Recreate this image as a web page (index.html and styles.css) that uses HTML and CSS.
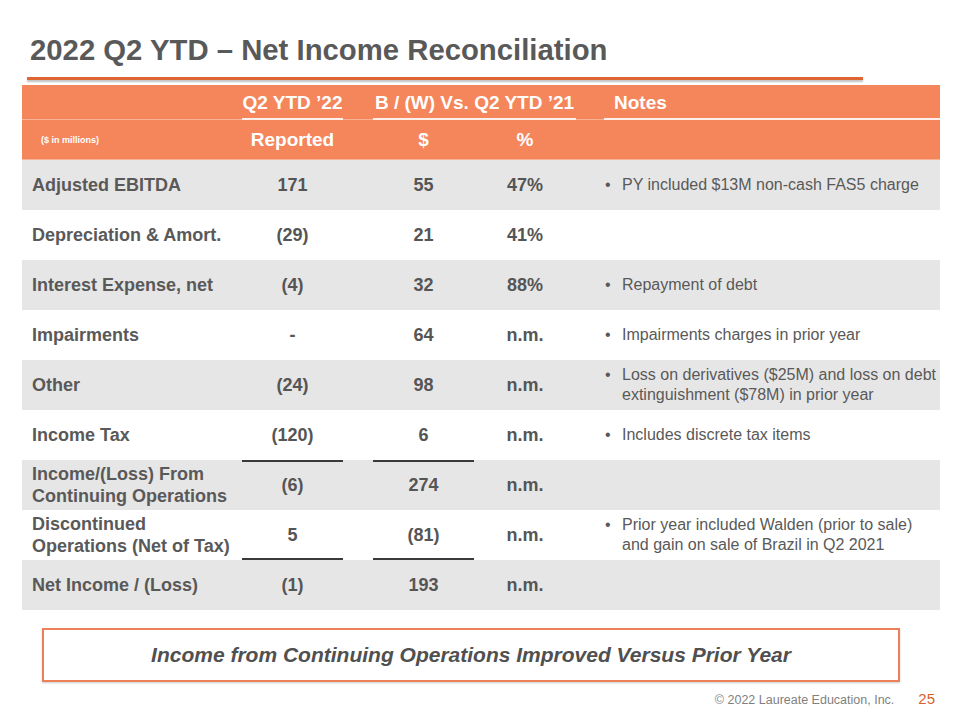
FILE: index.html
```html
<!DOCTYPE html>
<html lang="en">
  <head>
    <meta charset="UTF-8" />
    <meta name="viewport" content="width=device-width, initial-scale=1.0" />
    <title>2022 Q2 YTD – Net Income Reconciliation</title>
    <link rel="stylesheet" href="styles.css">
  </head>
  <body>
    <div class="slide">
      <h1 class="title">2022 Q2 YTD – Net Income Reconciliation</h1>
      <div class="title-rule"></div>

      <table class="recon">
        <colgroup>
          <col class="c-label">
          <col class="c-num">
          <col class="c-gap">
          <col class="c-num">
          <col class="c-pct">
          <col class="c-gap2">
          <col class="c-notes">
        </colgroup>
        <thead>
          <tr class="head-1">
            <th></th>
            <th class="ul">Q2 YTD ’22</th>
            <th></th>
            <th class="ul" colspan="2">B / (W) Vs. Q2 YTD ’21</th>
            <th></th>
            <th class="ul notes-head">Notes</th>
          </tr>
          <tr class="head-2">
            <th class="units">($ in millions)</th>
            <th>Reported</th>
            <th></th>
            <th>$</th>
            <th>%</th>
            <th></th>
            <th></th>
          </tr>
        </thead>
        <tbody>
          <tr class="shade">
            <td class="label">Adjusted EBITDA</td>
            <td class="num">171</td><td></td>
            <td class="num">55</td>
            <td class="num">47%</td><td></td>
            <td class="note"><span class="dot">•</span><span>PY included $13M non-cash FAS5 charge</span></td>
          </tr>
          <tr>
            <td class="label">Depreciation &amp; Amort.</td>
            <td class="num">(29)</td><td></td>
            <td class="num">21</td>
            <td class="num">41%</td><td></td>
            <td class="note"></td>
          </tr>
          <tr class="shade">
            <td class="label">Interest Expense, net</td>
            <td class="num">(4)</td><td></td>
            <td class="num">32</td>
            <td class="num">88%</td><td></td>
            <td class="note"><span class="dot">•</span><span>Repayment of debt</span></td>
          </tr>
          <tr>
            <td class="label">Impairments</td>
            <td class="num">-</td><td></td>
            <td class="num">64</td>
            <td class="num">n.m.</td><td></td>
            <td class="note"><span class="dot">•</span><span>Impairments charges in prior year</span></td>
          </tr>
          <tr class="shade">
            <td class="label">Other</td>
            <td class="num">(24)</td><td></td>
            <td class="num">98</td>
            <td class="num">n.m.</td><td></td>
            <td class="note"><span class="dot">•</span><span>Loss on derivatives ($25M) and loss on debt extinguishment ($78M) in prior year</span></td>
          </tr>
          <tr>
            <td class="label">Income Tax</td>
            <td class="num">(120)</td><td></td>
            <td class="num">6</td>
            <td class="num">n.m.</td><td></td>
            <td class="note"><span class="dot">•</span><span>Includes discrete tax items</span></td>
          </tr>
          <tr class="shade">
            <td class="label two-line">Income/(Loss) From<br>Continuing Operations</td>
            <td class="num rule-top">(6)</td><td></td>
            <td class="num rule-top">274</td>
            <td class="num">n.m.</td><td></td>
            <td class="note"></td>
          </tr>
          <tr>
            <td class="label two-line">Discontinued<br>Operations (Net of Tax)</td>
            <td class="num rule-bottom">5</td><td></td>
            <td class="num rule-bottom">(81)</td>
            <td class="num">n.m.</td><td></td>
            <td class="note"><span class="dot">•</span><span>Prior year included Walden (prior to sale) and gain on sale of Brazil in Q2 2021</span></td>
          </tr>
          <tr class="shade">
            <td class="label">Net Income / (Loss)</td>
            <td class="num">(1)</td><td></td>
            <td class="num">193</td>
            <td class="num">n.m.</td><td></td>
            <td class="note"></td>
          </tr>
        </tbody>
      </table>

      <div class="callout">Income from Continuing Operations Improved Versus Prior Year</div>

      <div class="footer">
        <span class="copy">© 2022 Laureate Education, Inc.</span>
        <span class="page">25</span>
      </div>
    </div>
  </body>
</html>
```

FILE: styles.css
```css
html {
  background: #ffffff;
}

body {
  margin: 0;
  padding: 0;
  font-family: "Liberation Sans", Arial, sans-serif;
  color: #595959;
  background: #ffffff;
}

.slide {
  width: 960px;
  height: 720px;
  overflow: hidden;
}

.title {
  margin: 0;
  padding: 33px 0 0 30px;
  font-size: 29.3px;
  line-height: 34px;
  font-weight: bold;
  color: #595959;
}

.title-rule {
  margin: 10px 0 0 27px;
  width: 836px;
  height: 3px;
  background: #dd6631;
  box-shadow: 0 2px 2px rgba(0, 0, 0, 0.25);
}

.recon {
  margin: 5px 0 0 22px;
  width: 918px;
  border-collapse: collapse;
  border-spacing: 0;
  table-layout: fixed;
}

.c-label { width: 220px; }
.c-num { width: 101px; }
.c-gap { width: 30px; }
.c-pct { width: 102px; }
.c-gap2 { width: 28px; }
.c-notes { width: 336px; }

.recon th {
  background: #f5855b;
  color: #ffffff;
  font-size: 19px;
  font-weight: bold;
  text-align: center;
  padding: 0;
}

.head-1 th {
  height: 35px;
  box-shadow: inset 0 -1px 0 #f9b293;
}

.head-1 th.ul {
  box-shadow: inset 0 -2px 0 #fdf0ea;
}

.head-1 .notes-head {
  text-align: left;
  padding-left: 10px;
}

.head-2 th {
  height: 40px;
  box-shadow: inset 0 -1px 0 #f9b293;
}

.head-2 .units {
  font-size: 9px;
  text-align: left;
  padding-left: 19px;
}

.recon td {
  height: 50px;
  padding: 0;
  vertical-align: middle;
  background: #ffffff;
}

.recon tr.shade td {
  background: #e7e6e6;
}

.label {
  padding-left: 10px !important;
  font-size: 18px;
  font-weight: bold;
  color: #595959;
}

.two-line {
  line-height: 22px;
}

.num {
  text-align: center;
  font-size: 18px;
  font-weight: bold;
  color: #555555;
}

.rule-top {
  box-shadow: inset 0 2px 0 #3a3a3a;
}

.rule-bottom {
  box-shadow: inset 0 -2px 0 #3a3a3a;
}

.note {
  font-size: 16px;
  line-height: 20px;
  color: #595959;
}

.note .dot {
  float: left;
  width: 18px;
  padding-left: 1px;
  box-sizing: border-box;
  text-align: left;
}

.note .dot + span {
  display: block;
  margin-left: 18px;
}

.callout {
  margin: 18px 0 0 42px;
  width: 858px;
  height: 54px;
  box-sizing: border-box;
  border: 2.5px solid #ec8058;
  box-shadow: 0 1px 2px rgba(0, 0, 0, 0.2);
  display: flex;
  align-items: center;
  justify-content: center;
  font-size: 21px;
  font-weight: bold;
  font-style: italic;
  color: #505050;
}

.footer {
  display: flex;
  justify-content: flex-end;
  align-items: baseline;
  gap: 24px;
  padding: 8px 25px 0 0;
}

.copy {
  font-size: 12.5px;
  color: #7f7f7f;
}

.page {
  font-size: 15px;
  color: #d8612c;
}
```
